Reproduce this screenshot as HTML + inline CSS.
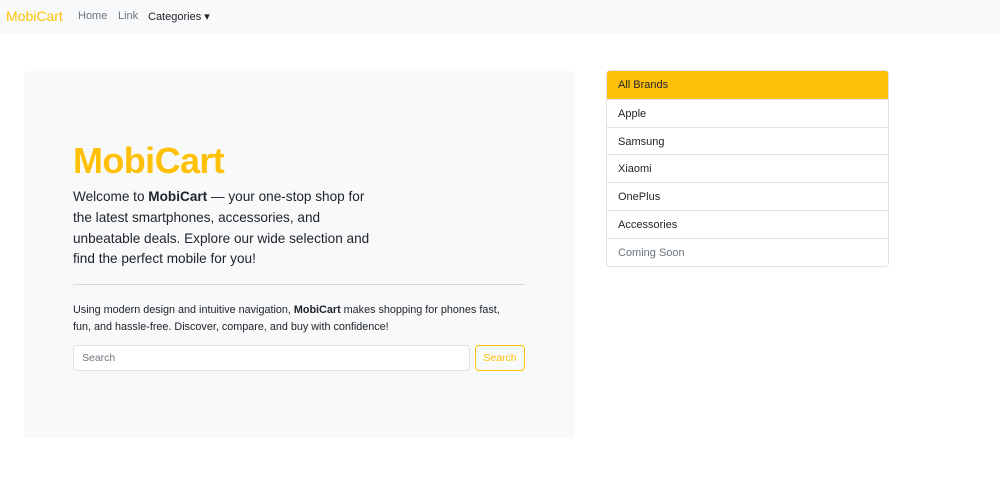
<!DOCTYPE html>
<html><head><style>
*{box-sizing:border-box;margin:0;padding:0}
body{width:1000px;height:500px;background:#fff;font-family:"Liberation Sans",sans-serif;color:#212529;position:relative;overflow:hidden}
.nav{position:absolute;left:0;top:0;width:1000px;height:34px;background:#f8f9fa}
.nav span{position:absolute;top:10px;font-size:11px;color:#6c757d}
.hero{position:absolute;left:24px;top:71px;width:551px;height:367px;background:#f8f9fa;border-radius:4px}
h1{position:absolute;left:73px;top:140px;font-size:36px;color:#ffc107;font-weight:bold;letter-spacing:-0.6px}
.lead{position:absolute;left:73px;top:187px;width:400px;font-size:13.6px;line-height:20.8px;white-space:nowrap}
hr{position:absolute;left:73px;top:284px;width:452px;border:0;border-top:1px solid #d6d7d8}
.p2{position:absolute;left:73px;top:302px;width:460px;font-size:10.8px;line-height:17px;white-space:nowrap}
.inp{position:absolute;left:73px;top:345px;width:397px;height:26px;border:1px solid #dee2e6;border-radius:4px;background:#fff;font-size:10.5px;color:#6c757d;padding:6px 8px}
.btn{position:absolute;left:475px;top:345px;width:50px;height:26px;border:1px solid #ffc107;border-radius:4px;font-size:10.5px;color:#ffc107;text-align:center;padding-top:6px}
.list{position:absolute;left:606px;top:70px;width:283px;border:1px solid #dee2e6;border-radius:4px;overflow:hidden}
.list div{height:27.8px;border-top:1px solid #dee2e6;font-size:11px;padding:8px 11px;background:#fff}
.list div:first-child{border-top:0;background:#ffc107;border-color:#ffc107}
</style></head><body>
<div class="nav">
<span style="left:6px;top:8px;font-size:14px;color:#ffc107">MobiCart</span>
<span style="left:78px">Home</span>
<span style="left:118px">Link</span>
<span style="left:148px;color:#212529">Categories ▾</span>
</div>
<div class="hero"></div>
<h1>MobiCart</h1>
<div class="lead">Welcome to <b>MobiCart</b> — your one-stop shop for<br>the latest smartphones, accessories, and<br>unbeatable deals. Explore our wide selection and<br>find the perfect mobile for you!</div>
<hr>
<div class="p2">Using modern design and intuitive navigation, <b>MobiCart</b> makes shopping for phones fast,<br>fun, and hassle-free. Discover, compare, and buy with confidence!</div>
<div class="inp">Search</div>
<div class="btn">Search</div>
<div class="list">
<div>All Brands</div><div>Apple</div><div>Samsung</div><div>Xiaomi</div><div>OnePlus</div><div>Accessories</div><div style="color:#6c757d">Coming Soon</div>
</div>
</body></html>
